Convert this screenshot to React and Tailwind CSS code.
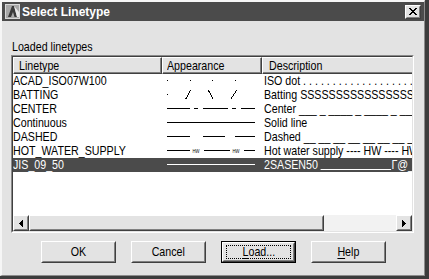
import React from "react";

const FONT = "font-['Liberation_Sans',Arial,sans-serif]";

function T({ children, center }) {
  return (
    <span
      className={
        "inline-block whitespace-nowrap scale-x-[0.82] " + (center ? "origin-center" : "origin-left")
      }
    >
      {children}
    </span>
  );
}

const rows = [
  { name: "ACAD_ISO07W100", desc: "ISO dot . . . . . . . . . . . . . . . . . . . . . . . . . . . . .", kind: "iso" },
  { name: "BATTING", desc: "Batting SSSSSSSSSSSSSSSSSSSSSSSSSSSSSS", kind: "batting" },
  { name: "CENTER", desc: "Center ___ _ ____ _ ____ _ ____ _ ____ _ ____", kind: "center" },
  { name: "Continuous", desc: "Solid line", kind: "solid" },
  { name: "DASHED", desc: "Dashed __ __ __ __ __ __ __ __ __ __ __ __ __", kind: "dashed" },
  { name: "HOT_WATER_SUPPLY", desc: "Hot water supply ---- HW ---- HW ---- HW ---- HW", kind: "hot" },
  {
    name: "JIS_09_50",
    desc: (
      <>
        2SASEN50{" "}
        <span className="inline-block w-[86px] h-[1px] bg-white relative top-[1px]" />
        Γ@_______
      </>
    ),
    kind: "jis",
    selected: true,
  },
];

function Appearance({ kind, selected }) {
  const c = selected ? "#ffffff" : "#000000";
  const seg = (a, b, k) => <rect key={k} x={a} y={6} width={b - a} height={1} fill={c} />;
  let content = null;
  if (kind === "iso") {
    content = [5, 28, 50, 73].map((x, i) => <rect key={i} x={x} y={6} width={1} height={1} fill={c} />);
  } else if (kind === "batting") {
    content = (
      <>
        <rect x={5} y={6} width={1} height={1} fill={c} />
        <path d="M23.5 11.5 L28.5 2.5" stroke={c} strokeWidth="1" fill="none" />
        <path d="M46.5 2.5 L51.5 11.5" stroke={c} strokeWidth="1" fill="none" />
        <path d="M68.5 11.5 L74.5 2.5" stroke={c} strokeWidth="1" fill="none" />
      </>
    );
  } else if (kind === "center") {
    content = [seg(5, 28, 1), seg(32, 36, 2), seg(41, 66, 3), seg(70, 74, 4), seg(79, 93, 5)];
  } else if (kind === "solid" || kind === "jis") {
    content = seg(5, 93, 1);
  } else if (kind === "dashed") {
    content = [seg(5, 28, 1), seg(41, 63, 2), seg(73, 93, 3)];
  } else if (kind === "hot") {
    content = (
      <>
        {seg(5, 28, 1)}
        <text x={30.5} y={9} fontSize="5.5" fontFamily="Liberation Sans, sans-serif" textLength="7" lengthAdjust="spacingAndGlyphs" fill={c}>HW</text>
        {seg(42, 68, 2)}
        <text x={70.5} y={9} fontSize="5.5" fontFamily="Liberation Sans, sans-serif" textLength="7" lengthAdjust="spacingAndGlyphs" fill={c}>HW</text>
        {seg(82, 93, 3)}
      </>
    );
  }
  return (
    <svg width="100" height="14" viewBox="0 0 100 14" shapeRendering="crispEdges" className="block">
      {content}
    </svg>
  );
}

function Raised({ className = "", children }) {
  return (
    <div className={"border border-t-white border-l-white border-r-[#404040] border-b-[#404040] " + className}>
      <div className="h-full border border-t-[#e3e3e3] border-l-[#e3e3e3] border-r-[#808080] border-b-[#808080] flex items-center justify-center">
        {children}
      </div>
    </div>
  );
}

function HeaderCell({ className = "", label, pad = "pl-[4px]" }) {
  return (
    <div className={"h-[17px] shrink-0 border border-t-white border-l-white border-r-[#404040] border-b-[#404040] " + className}>
      <div className={"h-full border-r border-b border-r-[#808080] border-b-[#808080] overflow-hidden " + pad}>
        <span className="block leading-[14px] pt-[1px] whitespace-nowrap text-black">
          <T>{label}</T>
        </span>
      </div>
    </div>
  );
}

function Button({ children, focused }) {
  if (focused) {
    return (
      <div className="w-[75px] h-[22px] border border-black">
        <Raised className="h-full">
          <div className="w-[65px] h-[14px] border border-dotted border-black flex items-center justify-center leading-[14px]">
            <T center>{children}</T>
          </div>
        </Raised>
      </div>
    );
  }
  return (
    <Raised className="w-[75px] h-[22px]">
      <span className="leading-[14px]">
        <T center>{children}</T>
      </span>
    </Raised>
  );
}

function ArrowLeft() {
  return (
    <svg width="4" height="7" viewBox="0 0 4 7" shapeRendering="crispEdges">
      <path d="M4 0 L0 3.5 L4 7 Z" fill="#000" />
    </svg>
  );
}
function ArrowRight() {
  return (
    <svg width="4" height="7" viewBox="0 0 4 7" shapeRendering="crispEdges">
      <path d="M0 0 L4 3.5 L0 7 Z" fill="#000" />
    </svg>
  );
}

export default function App() {
  return (
    <div className={"w-[429px] h-[279px] bg-[#3c3c3c] pr-[4px] pb-[3px] text-[13px] text-black " + FONT}>
      <div className="h-full flex flex-col bg-[#e3e3e3] border-l-2 border-t-2 border-l-[#f6f6f6] border-t-[#f6f6f6] border-r border-b border-r-[#8c8c8c] border-b-[#8c8c8c]">
        {/* Title bar */}
        <div className="h-[19px] shrink-0 bg-[#4b4b4b] flex items-center pl-[3px] pr-[3px]">
          <svg width="15" height="15" viewBox="0 0 15 15" className="shrink-0">
            <rect x="0" y="0" width="15" height="15" fill="#a8a8a8" />
            <rect x="0.5" y="0.5" width="14" height="14" fill="none" stroke="#d8d8d8" />
            <path d="M3 13 L7 2 L9 2 L12 13 L9.5 13 L8 8 L6 13 Z" fill="#3a3a3a" />
            <path d="M9 2 L12 13 L14 13 L14 8 Z" fill="#e8e8e8" />
          </svg>
          <span className="ml-[2px] text-white font-bold text-[12px] leading-[14px] whitespace-nowrap">
            Select Linetype
          </span>
          <div className="ml-auto w-[16px] h-[14px] shrink-0">
            <Raised className="h-full bg-[#e3e3e3]">
              <svg width="8" height="7" viewBox="0 0 8 7" shapeRendering="crispEdges">
                <path d="M0 0h2l2 2.5L6 0h2L5 3.5 8 7H6L4 4.5 2 7H0l3-3.5z" fill="#000" />
              </svg>
            </Raised>
          </div>
        </div>

        {/* Body */}
        <div className="flex-1 flex flex-col pl-[9px] pr-[10px]">
          <div className="mt-[19px] pl-[1px] leading-[14px] whitespace-nowrap">
            <T>Loaded linetypes</T>
          </div>

          {/* List */}
          <div className="mt-[1px] h-[178px] border border-t-[#8a8a8a] border-l-[#8a8a8a] border-r-white border-b-white">
            <div className="h-full border border-t-[#404040] border-l-[#404040] border-r-[#e3e3e3] border-b-[#e3e3e3]">
              <div className="h-full bg-white flex flex-col overflow-hidden">
                <div className="flex shrink-0 bg-[#e3e3e3]">
                  <HeaderCell className="w-[149px]" label="Linetype" pad="pl-[5px]" />
                  <HeaderCell className="w-[100px]" label="Appearance" pad="pl-[4px]" />
                  <HeaderCell className="w-[220px]" label="Description" pad="pl-[6px]" />
                </div>
                {rows.map((r) => (
                  <div
                    key={r.name}
                    className={
                      "flex h-[14px] shrink-0 leading-[13px] whitespace-nowrap " +
                      (r.selected ? "bg-[#4b4b4b] text-white" : "text-black")
                    }
                  >
                    <div className="w-[149px] shrink-0 overflow-x-clip">
                      <T>{r.name}</T>
                    </div>
                    <div className="w-[100px] shrink-0">
                      <Appearance kind={r.kind} selected={r.selected} />
                    </div>
                    <div className="flex-1 min-w-0 overflow-x-clip pl-[2px]">
                      <T>{r.desc}</T>
                    </div>
                  </div>
                ))}
                <div className="flex-1" />
                {/* Horizontal scrollbar */}
                <div className="h-[16px] shrink-0 flex">
                  <Raised className="w-[16px] h-full bg-[#e3e3e3] shrink-0">
                    <ArrowLeft />
                  </Raised>
                  <Raised className="w-[295px] h-full bg-[#e3e3e3] shrink-0" />
                  <div className="flex-1 bg-[#f2f2f2]" />
                  <Raised className="w-[16px] h-full bg-[#e3e3e3] shrink-0">
                    <ArrowRight />
                  </Raised>
                </div>
              </div>
            </div>
          </div>

          {/* Buttons */}
          <div className="mt-[8px] flex pl-[30px] gap-[15px]">
            <Button>OK</Button>
            <Button>Cancel</Button>
            <Button focused>
              <span className="underline underline-offset-2">L</span>oad...
            </Button>
            <Button>
              <span className="underline underline-offset-2">H</span>elp
            </Button>
          </div>
        </div>
      </div>
    </div>
  );
}
